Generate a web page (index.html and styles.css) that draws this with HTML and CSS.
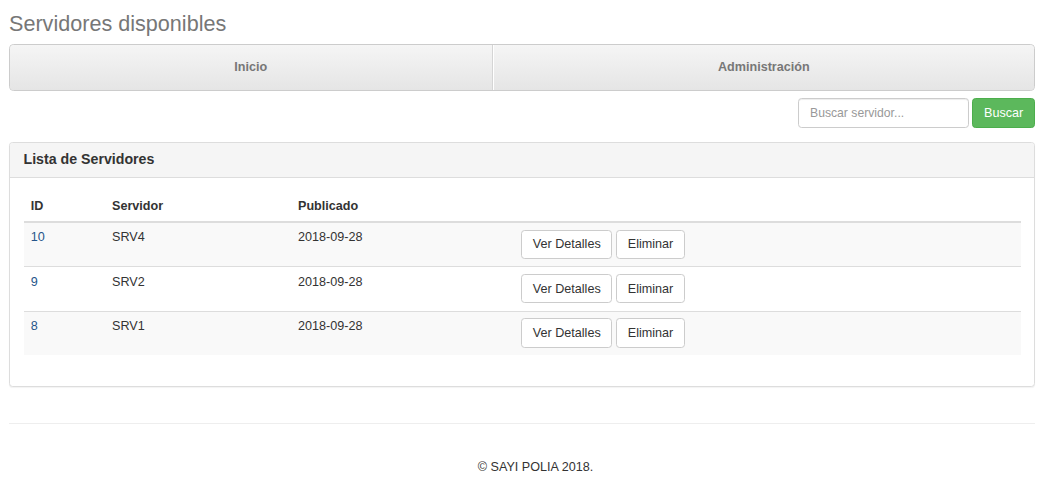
FILE: index.html
```html
<!DOCTYPE html>
<html lang="es">
<head>
<meta charset="utf-8">
<title>Servidores disponibles</title>
<link rel="stylesheet" href="styles.css">
</head>
<body>
<div class="page">
  <h3 class="page-title">Servidores disponibles</h3>
  <nav class="main-nav">
    <a href="#" class="nav-item">Inicio</a>
    <a href="#" class="nav-item">Administración</a>
  </nav>
  <form class="search">
    <input type="text" class="search-input" placeholder="Buscar servidor...">
    <button type="button" class="btn btn-success">Buscar</button>
  </form>
  <div class="panel">
    <div class="panel-heading">
      <h3 class="panel-title">Lista de Servidores</h3>
    </div>
    <div class="panel-body">
      <table class="table">
        <thead>
          <tr>
            <th class="col-id">ID</th>
            <th class="col-name">Servidor</th>
            <th class="col-date">Publicado</th>
            <th></th>
          </tr>
        </thead>
        <tbody>
          <tr>
            <td><a href="#" class="id-link">10</a></td>
            <td>SRV4</td>
            <td>2018-09-28</td>
            <td class="actions"><button type="button" class="btn btn-default">Ver Detalles</button> <button type="button" class="btn btn-default">Eliminar</button></td>
          </tr>
          <tr>
            <td><a href="#" class="id-link">9</a></td>
            <td>SRV2</td>
            <td>2018-09-28</td>
            <td class="actions"><button type="button" class="btn btn-default">Ver Detalles</button> <button type="button" class="btn btn-default">Eliminar</button></td>
          </tr>
          <tr>
            <td><a href="#" class="id-link">8</a></td>
            <td>SRV1</td>
            <td>2018-09-28</td>
            <td class="actions"><button type="button" class="btn btn-default">Ver Detalles</button> <button type="button" class="btn btn-default">Eliminar</button></td>
          </tr>
        </tbody>
      </table>
    </div>
  </div>
  <hr class="divider">
  <footer class="footer">
    <p class="footer-text">© SAYI POLIA 2018.</p>
  </footer>
</div>
</body>
</html>
```
FILE: styles.css
```css
* { box-sizing: border-box; }
html, body { margin: 0; padding: 0; background: #fff; }
body {
  font-family: "Liberation Sans", Arial, Helvetica, sans-serif;
  font-size: 12.6px;
  line-height: 18px;
  color: #333;
}
.page { margin: 0 8px 0 9px; }
.page-title {
  margin: 12px 0 8px;
  font-size: 21.6px;
  font-weight: normal;
  line-height: 23.76px;
  color: #777;
}
.main-nav {
  display: flex;
  height: 47px;
  border: 1px solid #ccc;
  border-radius: 4.5px;
  background: #eee;
  overflow: hidden;
}
.nav-item {
  flex: 1 1 auto;
  text-align: center;
  padding: 13.5px 0;
  line-height: 18px;
  font-weight: bold;
  color: #777;
  text-decoration: none;
  background: linear-gradient(to bottom, #f5f5f5 0%, #e5e5e5 100%);
}
.nav-item:first-child { border-right: 1px solid #d5d5d5; }
.nav-item + .nav-item { border-left: 1px solid #fff; }
.search {
  display: flex;
  justify-content: flex-end;
  gap: 3px;
  margin: 7px 0 0;
}
.search-input {
  width: 171px;
  height: 30px;
  padding: 0 10.8px;
  border: 1px solid #ccc;
  border-radius: 3.6px;
  font-family: inherit;
  font-size: 12.2px;
  color: #555;
  box-shadow: inset 0 1px 1px rgba(0,0,0,.075);
}
.search-input::placeholder { color: #999; }
.btn {
  display: inline-block;
  font-family: inherit;
  font-size: 12.6px;
  line-height: 18px;
  padding: 4.7px 10.8px;
  border: 1px solid transparent;
  border-radius: 3.6px;
  cursor: pointer;
  vertical-align: middle;
}
.btn-success {
  height: 30px;
  padding-top: 0;
  padding-bottom: 0;
  color: #fff;
  background: #5cb85c;
  border-color: #4cae4c;
}
.btn-default {
  color: #333;
  background: #fff;
  border-color: #ccc;
}
.panel {
  margin-top: 14px;
  border: 1px solid #ddd;
  border-radius: 3.6px;
  box-shadow: 0 1px 1px rgba(0,0,0,.05);
  background: #fff;
}
.panel-heading {
  padding: 9px 13.5px;
  background: #f5f5f5;
  border-bottom: 1px solid #ddd;
  border-radius: 3px 3px 0 0;
}
.panel-title {
  margin: 0;
  font-size: 14.2px;
  line-height: 15.84px;
  font-weight: bold;
  color: #333;
}
.panel-body { padding: 13.5px; }
.table {
  width: 100%;
  border-collapse: collapse;
  border-spacing: 0;
  margin-bottom: 18px;
}
.table th {
  text-align: left;
  vertical-align: bottom;
  padding: 5.5px 7.2px 6px;
  line-height: 18px;
  font-weight: bold;
  border-bottom: 2px solid #ddd;
}
.table td {
  vertical-align: top;
  padding: 5.6px 7.2px 7.2px;
  line-height: 18px;
  border-top: 1px solid #ddd;
}
.table td.actions { padding-top: 6.9px; }
.table tbody tr:first-child td { border-top: 0; }
.table tbody tr:nth-child(odd) { background: #f9f9f9; }
.col-id { width: 81.3px; }
.col-name { width: 186px; }
.col-date { width: 223px; }
.id-link { color: #26558a; text-decoration: none; }
.divider {
  margin: 36px 0 0;
  border: 0;
  border-top: 1px solid #eee;
  height: 0;
}
.footer { padding-left: 27px; text-align: center; }
.footer-text {
  margin: 33px 0 0;
  font-size: 12.6px;
  line-height: 20px;
  color: #333;
}
```
